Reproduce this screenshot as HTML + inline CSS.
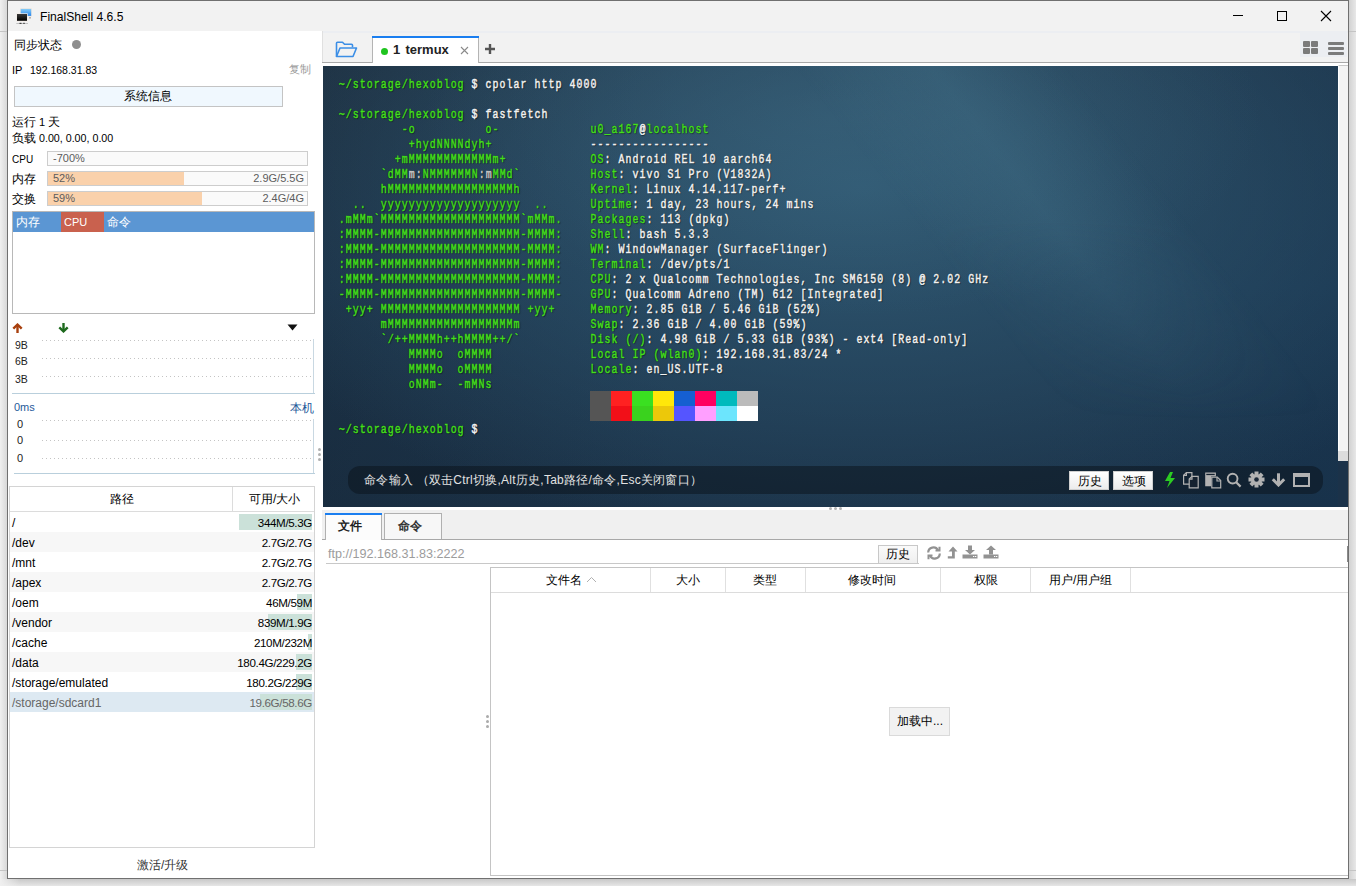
<!DOCTYPE html><html><head><meta charset="utf-8"><style>
*{margin:0;padding:0;box-sizing:border-box}
html,body{width:1356px;height:886px;overflow:hidden;background:#ececec;font-family:"Liberation Sans",sans-serif;font-size:12px;color:#000}
.ab{position:absolute}
.t{position:absolute;white-space:pre;line-height:1}
.term{position:absolute;left:323px;top:66px;width:1015px;height:441px;overflow:hidden;
 background:
  radial-gradient(ellipse 420px 200px at 520px 50px, rgba(72,118,142,0.3), rgba(72,118,142,0) 100%),
  radial-gradient(ellipse 680px 360px at 540px 120px, rgba(48,90,116,0.92), rgba(48,90,116,0) 100%),
  linear-gradient(90deg, rgba(18,28,38,0.25) 0%, rgba(18,28,38,0) 35%, rgba(18,50,80,0) 70%, rgba(18,50,80,0.35) 100%),
  linear-gradient(180deg,#213548 0%,#1e3850 50%,#1b3248 100%);
}
.streak{position:absolute;left:0;top:0;width:1015px;height:441px;background:linear-gradient(52deg, rgba(70,118,142,0) 60%, rgba(70,118,142,0.3) 70%, rgba(70,118,142,0) 80%);-webkit-mask-image:linear-gradient(180deg,#000 0%,#000 35%,transparent 80%)}
.tl{position:absolute;left:16px;font-family:"Liberation Mono",monospace;font-size:11.67px;line-height:15px;white-space:pre;color:#f2f2f2;transform:translateX(-0.3px) scale(0.85,1.1);transform-origin:0 10.6px;letter-spacing:1.235px;-webkit-text-stroke:0.45px currentColor;text-shadow:0 0 1px rgba(0,0,0,.9),1px 1px 1px rgba(0,0,0,.5)}
.g{color:#44de1e}
.w{color:#f2f2f2}
.gy{color:#c8c8c8}
</style></head><body>
<div class="ab" style="left:0;top:0;width:1356px;height:886px;background:#ebebeb"></div>
<div class="ab" style="left:1349px;top:0;width:7px;height:886px;background:linear-gradient(90deg,#d2d2d2,#e8e8e8)"></div>
<div class="ab" style="left:0;top:0;width:7px;height:886px;background:linear-gradient(90deg,#f0f0f0,#d8d8d8)"></div>
<div class="ab" style="left:0;top:879px;width:1356px;height:7px;background:linear-gradient(180deg,#c8c8c8,#e6e6e6)"></div>
<div class="ab" style="left:0;top:879px;width:20px;height:7px;background:linear-gradient(90deg,#f0f0f0,rgba(240,240,240,0))"></div>
<div class="ab" style="left:0;top:31px;width:7px;height:1px;background:#c4c4c4"></div>
<div class="ab" style="left:1349px;top:31px;width:7px;height:1px;background:#c4c4c4"></div>
<div class="ab" style="left:0;top:870px;width:7px;height:1px;background:#c4c4c4"></div>
<div class="ab" style="left:1349px;top:870px;width:7px;height:1px;background:#c4c4c4"></div>
<div class="ab" style="left:7px;top:0;width:1342px;height:879px;border:1px solid #707070;background:#fff"></div>
<div class="ab" style="left:8px;top:1px;width:1340px;height:30px;background:#f2f2f2"></div>
<svg class="ab" style="left:15px;top:7px" width="18" height="18" viewBox="0 0 18 18">
<defs><linearGradient id="bm" x1="0" y1="0" x2="0" y2="1"><stop offset="0" stop-color="#86cdf8"/><stop offset="1" stop-color="#2a86ec"/></linearGradient>
<linearGradient id="km" x1="0" y1="0" x2="0" y2="1"><stop offset="0" stop-color="#3a3a3a"/><stop offset="1" stop-color="#000"/></linearGradient></defs>
<rect x="5" y="1.2" width="11.8" height="8.4" fill="#efe6de"/>
<rect x="5.7" y="1.9" width="10.5" height="7" fill="url(#bm)"/>
<rect x="14" y="10.5" width="2" height="0.8" fill="#777"/>
<rect x="1.3" y="6.3" width="11.4" height="8.3" fill="#f3ece6"/>
<rect x="2" y="7" width="10" height="6.8" fill="url(#km)"/>
<rect x="1.3" y="16" width="11.7" height="0.9" fill="#bbb"/>
<rect x="4.5" y="15.8" width="2" height="1.2" fill="#444"/><rect x="8" y="15.8" width="2" height="1.2" fill="#666"/>
</svg>
<div class="t" style="left:40px;top:11px;font-size:12.1px;color:#000">FinalShell 4.6.5</div>
<div class="ab" style="left:1233px;top:15px;width:10px;height:1px;background:#000"></div>
<div class="ab" style="left:1277px;top:11px;width:10px;height:10px;border:1px solid #000"></div>
<svg class="ab" style="left:1320px;top:10px" width="12" height="12" viewBox="0 0 12 12"><path d="M1 1L11 11M11 1L1 11" stroke="#000" stroke-width="1.1"/></svg>
<div class="t" style="left:14px;top:39px;font-size:12px">同步状态</div>
<div class="ab" style="left:72px;top:40px;width:9px;height:9px;border-radius:50%;background:#8e8e8e"></div>
<div class="t" style="left:12px;top:65px;font-size:11px">IP</div>
<div class="t" style="left:30px;top:65px;font-size:10.5px">192.168.31.83</div>
<div class="t" style="left:289px;top:64px;font-size:11px;color:#9a9a9a">复制</div>
<div class="ab" style="left:14px;top:86px;width:269px;height:21px;border:1px solid #c4c4c4;background:#f0f8fe"></div>
<div class="t" style="left:124px;top:90px;font-size:12px">系统信息</div>
<div class="t" style="left:12px;top:116px;font-size:12px">运行<span style="font-size:11px"> 1 </span>天</div>
<div class="t" style="left:12px;top:132px;font-size:12px">负载<span style="font-size:10.7px"> 0.00, 0.00, 0.00</span></div>
<div class="t" style="left:12px;top:155px;font-size:10px">CPU</div>
<div class="ab" style="left:47px;top:151px;width:261px;height:15px;border:1px solid #cdcdcd;background:#fafafa"></div>
<div class="t" style="left:53px;top:153px;font-size:11px;color:#5c5c5c">-700%</div>
<div class="t" style="left:12px;top:173px;font-size:12px">内存</div>
<div class="ab" style="left:47px;top:171px;width:261px;height:15px;border:1px solid #cdcdcd;background:#fafafa"></div>
<div class="ab" style="left:48px;top:172px;width:136px;height:13px;background:#fad1ab"></div>
<div class="t" style="left:53px;top:173px;font-size:11px;color:#5c5c5c">52%</div>
<div class="t" style="right:1052px;top:173px;font-size:11px;color:#5c5c5c">2.9G/5.5G</div>
<div class="t" style="left:12px;top:193px;font-size:12px">交换</div>
<div class="ab" style="left:47px;top:191px;width:261px;height:15px;border:1px solid #cdcdcd;background:#fafafa"></div>
<div class="ab" style="left:48px;top:192px;width:154px;height:13px;background:#fad1ab"></div>
<div class="t" style="left:53px;top:193px;font-size:11px;color:#5c5c5c">59%</div>
<div class="t" style="right:1052px;top:193px;font-size:11px;color:#5c5c5c">2.4G/4G</div>
<div class="ab" style="left:12px;top:211px;width:303px;height:103px;border:1px solid #b8b8b8;background:#fff"></div>
<div class="ab" style="left:13px;top:212px;width:301px;height:20px;background:#5b96d3"></div>
<div class="ab" style="left:61px;top:212px;width:43px;height:20px;background:#c9614e"></div>
<div class="t" style="left:16px;top:216px;font-size:12px;color:#fff">内存</div>
<div class="t" style="left:64px;top:217px;font-size:11px;color:#fff">CPU</div>
<div class="t" style="left:107px;top:216px;font-size:12px;color:#fff">命令</div>
<svg class="ab" style="left:12px;top:323px" width="11" height="10" viewBox="0 0 11 10" fill="none" stroke="#a8400e"><path d="M5.5 2V10" stroke-width="2.4"/><path d="M1.3 5.6L5.5 1.6L9.7 5.6" stroke-width="2.4"/></svg>
<svg class="ab" style="left:58px;top:323px" width="11" height="10" viewBox="0 0 11 10" fill="none" stroke="#1e6a1e"><path d="M5.5 0V8" stroke-width="2.4"/><path d="M1.3 4.4L5.5 8.4L9.7 4.4" stroke-width="2.4"/></svg>
<svg class="ab" style="left:287px;top:324px" width="11" height="7" viewBox="0 0 11 7"><path d="M0.5 0.5H10.5L5.5 6.5Z" fill="#111"/></svg>
<div class="ab" style="left:12px;top:393px;width:303px;height:1px;background:#b9cfdc"></div>
<div class="ab" style="left:313px;top:339px;width:1px;height:54px;background:#c9d8e2"></div>
<div class="ab" style="left:42px;top:340px;width:271px;height:1px;background-image:linear-gradient(90deg,#c4c4c4 1px,transparent 1px);background-size:4px 1px"></div>
<div class="ab" style="left:42px;top:358px;width:271px;height:1px;background-image:linear-gradient(90deg,#c4c4c4 1px,transparent 1px);background-size:4px 1px"></div>
<div class="ab" style="left:42px;top:376px;width:271px;height:1px;background-image:linear-gradient(90deg,#c4c4c4 1px,transparent 1px);background-size:4px 1px"></div>
<div class="t" style="left:15px;top:340px;font-size:10.5px;color:#222">9B</div>
<div class="t" style="left:15px;top:356px;font-size:10.5px;color:#222">6B</div>
<div class="t" style="left:15px;top:374px;font-size:10.5px;color:#222">3B</div>
<div class="t" style="left:14px;top:402px;font-size:11px;color:#1f5a9a">0ms</div>
<div class="t" style="left:290px;top:402px;font-size:12px;color:#1f5a9a">本机</div>
<div class="ab" style="left:14px;top:473px;width:301px;height:1px;background:#b9cfdc"></div>
<div class="ab" style="left:313px;top:419px;width:1px;height:54px;background:#c9d8e2"></div>
<div class="ab" style="left:42px;top:420px;width:271px;height:1px;background-image:linear-gradient(90deg,#c4c4c4 1px,transparent 1px);background-size:4px 1px"></div>
<div class="ab" style="left:42px;top:440px;width:271px;height:1px;background-image:linear-gradient(90deg,#c4c4c4 1px,transparent 1px);background-size:4px 1px"></div>
<div class="ab" style="left:42px;top:458px;width:271px;height:1px;background-image:linear-gradient(90deg,#c4c4c4 1px,transparent 1px);background-size:4px 1px"></div>
<div class="t" style="left:17px;top:419px;font-size:11px;color:#222">0</div>
<div class="t" style="left:17px;top:435px;font-size:11px;color:#222">0</div>
<div class="t" style="left:17px;top:453px;font-size:11px;color:#222">0</div>
<div class="ab" style="left:318px;top:448px;width:3px;height:3px;border-radius:50%;background:#b0b0b0"></div>
<div class="ab" style="left:318px;top:453px;width:3px;height:3px;border-radius:50%;background:#b0b0b0"></div>
<div class="ab" style="left:318px;top:458px;width:3px;height:3px;border-radius:50%;background:#b0b0b0"></div>
<div class="ab" style="left:9px;top:486px;width:306px;height:362px;border:1px solid #d4d4d4;background:#fff"></div>
<div class="ab" style="left:10px;top:511px;width:304px;height:1px;background:#dcdcdc"></div>
<div class="ab" style="left:232px;top:487px;width:1px;height:24px;background:#dcdcdc"></div>
<div class="t" style="left:110px;top:493px;font-size:12px">路径</div>
<div class="t" style="left:249px;top:493px;font-size:12px">可用/大小</div>
<div class="ab" style="left:10px;top:512px;width:304px;height:20px;background:#fff"></div>
<div class="ab" style="left:239px;top:514px;width:73px;height:16px;background:#cbe1d9"></div>
<div class="t" style="left:12px;top:517px;font-size:12px;color:#000">/</div>
<div class="t" style="right:1044px;top:517px;font-size:11.6px;letter-spacing:-0.35px;color:#000">344M/5.3G</div>
<div class="ab" style="left:10px;top:532px;width:304px;height:20px;background:#f7f7f7"></div>
<div class="t" style="left:12px;top:537px;font-size:12px;color:#000">/dev</div>
<div class="t" style="right:1044px;top:537px;font-size:11.6px;letter-spacing:-0.35px;color:#000">2.7G/2.7G</div>
<div class="ab" style="left:10px;top:552px;width:304px;height:20px;background:#fff"></div>
<div class="t" style="left:12px;top:557px;font-size:12px;color:#000">/mnt</div>
<div class="t" style="right:1044px;top:557px;font-size:11.6px;letter-spacing:-0.35px;color:#000">2.7G/2.7G</div>
<div class="ab" style="left:10px;top:572px;width:304px;height:20px;background:#f7f7f7"></div>
<div class="t" style="left:12px;top:577px;font-size:12px;color:#000">/apex</div>
<div class="t" style="right:1044px;top:577px;font-size:11.6px;letter-spacing:-0.35px;color:#000">2.7G/2.7G</div>
<div class="ab" style="left:10px;top:592px;width:304px;height:20px;background:#fff"></div>
<div class="ab" style="left:297px;top:594px;width:15px;height:16px;background:#cbe1d9"></div>
<div class="t" style="left:12px;top:597px;font-size:12px;color:#000">/oem</div>
<div class="t" style="right:1044px;top:597px;font-size:11.6px;letter-spacing:-0.35px;color:#000">46M/59M</div>
<div class="ab" style="left:10px;top:612px;width:304px;height:20px;background:#f7f7f7"></div>
<div class="ab" style="left:268px;top:614px;width:44px;height:16px;background:#cbe1d9"></div>
<div class="t" style="left:12px;top:617px;font-size:12px;color:#000">/vendor</div>
<div class="t" style="right:1044px;top:617px;font-size:11.6px;letter-spacing:-0.35px;color:#000">839M/1.9G</div>
<div class="ab" style="left:10px;top:632px;width:304px;height:20px;background:#fff"></div>
<div class="ab" style="left:308px;top:634px;width:4px;height:16px;background:#cbe1d9"></div>
<div class="t" style="left:12px;top:637px;font-size:12px;color:#000">/cache</div>
<div class="t" style="right:1044px;top:637px;font-size:11.6px;letter-spacing:-0.35px;color:#000">210M/232M</div>
<div class="ab" style="left:10px;top:652px;width:304px;height:20px;background:#f7f7f7"></div>
<div class="ab" style="left:296px;top:654px;width:16px;height:16px;background:#cbe1d9"></div>
<div class="t" style="left:12px;top:657px;font-size:12px;color:#000">/data</div>
<div class="t" style="right:1044px;top:657px;font-size:11.6px;letter-spacing:-0.35px;color:#000">180.4G/229.2G</div>
<div class="ab" style="left:10px;top:672px;width:304px;height:20px;background:#fff"></div>
<div class="ab" style="left:296px;top:674px;width:16px;height:16px;background:#cbe1d9"></div>
<div class="t" style="left:12px;top:677px;font-size:12px;color:#000">/storage/emulated</div>
<div class="t" style="right:1044px;top:677px;font-size:11.6px;letter-spacing:-0.35px;color:#000">180.2G/229G</div>
<div class="ab" style="left:10px;top:692px;width:304px;height:20px;background:#dde9f2"></div>
<div class="ab" style="left:260px;top:694px;width:52px;height:16px;background:#cbe1d9"></div>
<div class="t" style="left:12px;top:697px;font-size:12px;color:#666">/storage/sdcard1</div>
<div class="t" style="right:1044px;top:697px;font-size:11.6px;letter-spacing:-0.35px;color:#666">19.6G/58.6G</div>
<div class="t" style="left:137px;top:859px;font-size:12px;color:#333">激活/升级</div>
<div class="ab" style="left:322px;top:31px;width:1026px;height:32px;background:#f2f2f2;border-left:1px solid #e0e0e0"></div>
<div class="ab" style="left:323px;top:31px;width:1025px;height:2px;background:#eceef2"></div>
<div class="ab" style="left:1300px;top:31px;width:47px;height:26px;background:#eceef2"></div>
<div class="ab" style="left:322px;top:62px;width:1026px;height:1px;background:#a8a8a8"></div>
<div class="ab" style="left:322px;top:63px;width:1026px;height:3px;background:#fff"></div>
<svg class="ab" style="left:335px;top:41px" width="23" height="17" viewBox="0 0 23 17">
<path d="M1.5 15.5V2.2Q1.5 1.2 2.5 1.2H7.5L9.5 3.2H16.5Q17.5 3.2 17.5 4.2V6.2" fill="none" stroke="#3b8ee6" stroke-width="1.6" stroke-linejoin="round"/>
<path d="M1.5 15.5L5 7H21.5L18 15.5Z" fill="none" stroke="#3b8ee6" stroke-width="1.6" stroke-linejoin="round"/>
</svg>
<div class="ab" style="left:372px;top:36px;width:107px;height:27px;background:#fff;border-left:1px solid #b4b4b4;border-right:1px solid #b4b4b4"></div>
<div class="ab" style="left:372px;top:36px;width:107px;height:2px;background:#1a7ef0"></div>
<div class="ab" style="left:381px;top:48px;width:7px;height:7px;border-radius:50%;background:#1fc41f"></div>
<div class="t" style="left:393px;top:43px;font-size:13px;font-weight:bold;color:#222">1</div>
<div class="t" style="left:405.5px;top:43px;font-size:13px;font-weight:bold;color:#222">termux</div>
<svg class="ab" style="left:460px;top:46px" width="9" height="9" viewBox="0 0 9 9"><path d="M1 1L8 8M8 1L1 8" stroke="#8a8a8a" stroke-width="1.1"/></svg>
<svg class="ab" style="left:484px;top:43px" width="12" height="12" viewBox="0 0 12 12"><path d="M6 1V11M1 6H11" stroke="#555" stroke-width="2.4"/></svg>
<div class="ab" style="left:1303px;top:41px;width:7px;height:6px;border-radius:1px;background:#7b7b7b"></div>
<div class="ab" style="left:1311px;top:41px;width:7px;height:6px;border-radius:1px;background:#7b7b7b"></div>
<div class="ab" style="left:1303px;top:48px;width:7px;height:6px;border-radius:1px;background:#7b7b7b"></div>
<div class="ab" style="left:1311px;top:48px;width:7px;height:6px;border-radius:1px;background:#7b7b7b"></div>
<div class="ab" style="left:1328px;top:42px;width:16px;height:3px;border-radius:1px;background:#7b7b7b"></div>
<div class="ab" style="left:1328px;top:47px;width:16px;height:3px;border-radius:1px;background:#7b7b7b"></div>
<div class="ab" style="left:1328px;top:52px;width:16px;height:3px;border-radius:1px;background:#7b7b7b"></div>
<div class="term">
<div class="streak"></div>
<div class="tl" style="top:11.5px"><span class="g">~/storage/hexoblog</span> $ cpolar http 4000</div>
<div class="tl" style="top:41.5px"><span class="g">~/storage/hexoblog</span> $ fastfetch</div>
<div class="tl" style="top:56.5px"><span class="g">         -o          o-</span>             <span class="g">u0_a167</span><span class="w">@</span><span class="g">localhost</span></div>
<div class="tl" style="top:71.5px"><span class="g">          +hydNNNNdyh+</span>              <span class="w">-----------------</span></div>
<div class="tl" style="top:86.5px"><span class="g">        +mMMMMMMMMMMMMm+</span>            <span class="g">OS</span><span class="w">: Android REL 10 aarch64</span></div>
<div class="tl" style="top:101.5px"><span class="g">      `dMM</span><span class="gy">m:</span><span class="g">NMMMMMMN</span><span class="gy">:m</span><span class="g">MMd`</span>          <span class="g">Host</span><span class="w">: vivo S1 Pro (V1832A)</span></div>
<div class="tl" style="top:116.5px"><span class="g">      hMMMMMMMMMMMMMMMMMMh</span>          <span class="g">Kernel</span><span class="w">: Linux 4.14.117-perf+</span></div>
<div class="tl" style="top:131.5px"><span class="g">  ..  yyyyyyyyyyyyyyyyyyyy  ..</span>      <span class="g">Uptime</span><span class="w">: 1 day, 23 hours, 24 mins</span></div>
<div class="tl" style="top:146.5px"><span class="g">.mMMm`MMMMMMMMMMMMMMMMMMMM`mMMm.</span>    <span class="g">Packages</span><span class="w">: 113 (dpkg)</span></div>
<div class="tl" style="top:161.5px"><span class="g">:MMMM-MMMMMMMMMMMMMMMMMMMM-MMMM:</span>    <span class="g">Shell</span><span class="w">: bash 5.3.3</span></div>
<div class="tl" style="top:176.5px"><span class="g">:MMMM-MMMMMMMMMMMMMMMMMMMM-MMMM:</span>    <span class="g">WM</span><span class="w">: WindowManager (SurfaceFlinger)</span></div>
<div class="tl" style="top:191.5px"><span class="g">:MMMM-MMMMMMMMMMMMMMMMMMMM-MMMM:</span>    <span class="g">Terminal</span><span class="w">: /dev/pts/1</span></div>
<div class="tl" style="top:206.5px"><span class="g">:MMMM-MMMMMMMMMMMMMMMMMMMM-MMMM:</span>    <span class="g">CPU</span><span class="w">: 2 x Qualcomm Technologies, Inc SM6150 (8) @ 2.02 GHz</span></div>
<div class="tl" style="top:221.5px"><span class="g">-MMMM-MMMMMMMMMMMMMMMMMMMM-MMMM-</span>    <span class="g">GPU</span><span class="w">: Qualcomm Adreno (TM) 612 [Integrated]</span></div>
<div class="tl" style="top:236.5px"><span class="g"> +yy+ MMMMMMMMMMMMMMMMMMMM +yy+</span>     <span class="g">Memory</span><span class="w">: 2.85 GiB / 5.46 GiB (52%)</span></div>
<div class="tl" style="top:251.5px"><span class="g">      mMMMMMMMMMMMMMMMMMMm</span>          <span class="g">Swap</span><span class="w">: 2.36 GiB / 4.00 GiB (59%)</span></div>
<div class="tl" style="top:266.5px"><span class="g">      `/++MMMMh++hMMMM++/`</span>          <span class="g">Disk (/)</span><span class="w">: 4.98 GiB / 5.33 GiB (93%) - ext4 [Read-only]</span></div>
<div class="tl" style="top:281.5px"><span class="g">          MMMMo  oMMMM</span>              <span class="g">Local IP (wlan0)</span><span class="w">: 192.168.31.83/24 *</span></div>
<div class="tl" style="top:296.5px"><span class="g">          MMMMo  oMMMM</span>              <span class="g">Locale</span><span class="w">: en_US.UTF-8</span></div>
<div class="tl" style="top:311.5px"><span class="g">          oNMm-  -mMNs</span></div>
<div class="tl" style="top:356.5px"><span class="g">~/storage/hexoblog</span> $</div>
<div class="ab" style="left:267px;top:325px;width:21px;height:15px;background:#555555"></div>
<div class="ab" style="left:288px;top:325px;width:21px;height:15px;background:#ff2121"></div>
<div class="ab" style="left:309px;top:325px;width:21px;height:15px;background:#3ae021"></div>
<div class="ab" style="left:330px;top:325px;width:21px;height:15px;background:#ffe70a"></div>
<div class="ab" style="left:351px;top:325px;width:21px;height:15px;background:#155fd1"></div>
<div class="ab" style="left:372px;top:325px;width:21px;height:15px;background:#ff0060"></div>
<div class="ab" style="left:393px;top:325px;width:21px;height:15px;background:#00babd"></div>
<div class="ab" style="left:414px;top:325px;width:21px;height:15px;background:#bbbbbb"></div>
<div class="ab" style="left:267px;top:340px;width:21px;height:15px;background:#555555"></div>
<div class="ab" style="left:288px;top:340px;width:21px;height:15px;background:#f20f18"></div>
<div class="ab" style="left:309px;top:340px;width:21px;height:15px;background:#3ad21e"></div>
<div class="ab" style="left:330px;top:340px;width:21px;height:15px;background:#ecc80a"></div>
<div class="ab" style="left:351px;top:340px;width:21px;height:15px;background:#5555ff"></div>
<div class="ab" style="left:372px;top:340px;width:21px;height:15px;background:#ff9fff"></div>
<div class="ab" style="left:393px;top:340px;width:21px;height:15px;background:#6ce5fd"></div>
<div class="ab" style="left:414px;top:340px;width:21px;height:15px;background:#ffffff"></div>
<div class="ab" style="left:25px;top:400px;width:975px;height:28px;border-radius:12px;background:rgba(10,18,26,0.5)"></div>
<div class="t" style="left:41px;top:408px;font-size:12px;letter-spacing:0.25px;color:#e2e2e2">命令输入 （双击Ctrl切换,Alt历史,Tab路径/命令,Esc关闭窗口）</div>
<div class="ab" style="left:746px;top:405px;width:40px;height:19px;border:1px solid #d0d0d0;background:linear-gradient(#ffffff,#ececec)"></div>
<div class="t" style="left:755px;top:409px;font-size:12px;color:#000">历史</div>
<div class="ab" style="left:790px;top:405px;width:40px;height:19px;border:1px solid #d0d0d0;background:linear-gradient(#ffffff,#ececec)"></div>
<div class="t" style="left:799px;top:409px;font-size:12px;color:#000">选项</div>
<svg class="ab" style="left:841px;top:405px" width="12" height="18" viewBox="0 0 12 18"><path d="M6 1L1 10H5.5L3 17L11 7H6.5L9 1Z" fill="#2ccc22"/></svg>
<svg class="ab" style="left:859px;top:405px" width="18" height="18" viewBox="0 0 18 18" fill="none" stroke="#b2b2b2" stroke-width="1.2">
<path d="M1.6 13.2V4.2L4.4 1.6H9.9V13.2Z"/><path d="M1.6 4.4H4.4V1.6"/>
<path d="M7.2 16.8V8L10 5.3H16.2V16.8Z" fill="#152230"/><path d="M7.2 8.2H10V5.3"/></svg>
<svg class="ab" style="left:882px;top:405px" width="18" height="18" viewBox="0 0 18 18">
<path d="M0.2 1.5H10.9V5.2H6.2V15.2H0.2Z" fill="#b2b2b2"/><rect x="1.3" y="2.8" width="8.4" height="1.3" fill="#152230"/>
<path d="M6.8 16.9V6.2H12.3L15.7 9.6V16.9Z" fill="none" stroke="#b2b2b2" stroke-width="1.2"/><path d="M12 6.2V10H15.7" fill="none" stroke="#b2b2b2" stroke-width="1.2"/></svg>
<svg class="ab" style="left:903px;top:406px" width="17" height="17" viewBox="0 0 17 17" fill="none" stroke="#b2b2b2">
<circle cx="6.6" cy="6.6" r="4.9" stroke-width="1.9"/><path d="M10.2 10.2L14.6 14.6" stroke-width="2.2"/></svg>
<svg class="ab" style="left:925px;top:405px" width="17" height="17" viewBox="0 0 17 17">
<g fill="#b2b2b2" transform="translate(8.5 8.5)">
<rect x="-2" y="-8" width="4" height="16"/><rect x="-2" y="-8" width="4" height="16" transform="rotate(45)"/>
<rect x="-2" y="-8" width="4" height="16" transform="rotate(90)"/><rect x="-2" y="-8" width="4" height="16" transform="rotate(135)"/>
<circle r="5.6"/></g><circle cx="8.5" cy="8.5" r="2.3" fill="#1a2838"/></svg>
<svg class="ab" style="left:948px;top:407px" width="15" height="14" viewBox="0 0 15 14" fill="none" stroke="#b2b2b2" stroke-width="3">
<path d="M7.5 0.3V11"/><path d="M1.8 6.3L7.5 12L13.2 6.3"/></svg>
<svg class="ab" style="left:970px;top:407px" width="17" height="14" viewBox="0 0 17 14" fill="none">
<rect x="1" y="1" width="15" height="12" stroke="#b2b2b2" stroke-width="2"/><rect x="1" y="1" width="15" height="3" fill="#b2b2b2"/></svg>
</div>
<div class="ab" style="left:1338px;top:65px;width:10px;height:396px;background:#f4f4f4;border-top:1px solid #c8c8c8;border-left:1px solid #fff"></div>
<div class="ab" style="left:1338px;top:451px;width:10px;height:10px;background:#dcdcdc"></div>
<div class="ab" style="left:1338px;top:461px;width:10px;height:46px;background:#1b3249"></div>
<div class="ab" style="left:322px;top:507px;width:1026px;height:3px;background:#fff"></div>
<div class="ab" style="left:322px;top:510px;width:1026px;height:29px;background:#f0f0f0"></div>
<div class="ab" style="left:829.0px;top:507px;width:3px;height:3px;border-radius:50%;background:#b4b4b4"></div>
<div class="ab" style="left:834.0px;top:507px;width:3px;height:3px;border-radius:50%;background:#b4b4b4"></div>
<div class="ab" style="left:839.0px;top:507px;width:3px;height:3px;border-radius:50%;background:#b4b4b4"></div>
<div class="ab" style="left:322px;top:539px;width:1026px;height:1px;background:#a8a8a8"></div>
<div class="ab" style="left:325px;top:513px;width:57px;height:27px;background:#fcfcfc;border-left:1px solid #b0b0b0;border-right:1px solid #b0b0b0"></div>
<div class="ab" style="left:325px;top:513px;width:57px;height:2px;background:#1a7ef0"></div>
<div class="ab" style="left:384px;top:513px;width:58px;height:26px;background:#f7f7f7;border:1px solid #b0b0b0;border-bottom:none"></div>
<div class="t" style="left:338px;top:520px;font-size:12px;font-weight:bold;color:#222">文件</div>
<div class="t" style="left:398px;top:520px;font-size:12px;font-weight:bold;color:#333">命令</div>
<div class="t" style="left:328px;top:548px;font-size:12.6px;color:#9c9c9c">ftp://192.168.31.83:2222</div>
<div class="ab" style="left:326px;top:563px;width:593px;height:1px;background:#c8c8c8"></div>
<div class="ab" style="left:878px;top:545px;width:40px;height:19px;border:1px solid #c8c8c8;background:linear-gradient(#fafafa,#efefef)"></div>
<div class="t" style="left:886px;top:548px;font-size:12px;color:#000">历史</div>
<svg class="ab" style="left:926px;top:546px" width="16" height="14" viewBox="0 0 16 14" fill="none" stroke="#929292" stroke-width="2.2">
<path d="M2.2 6.5A5.2 5.2 0 0 1 12 4.2"/><path d="M13.8 7.5A5.2 5.2 0 0 1 4 9.8"/>
<path d="M9.5 4.5H13.5V0.8" stroke-width="2"/><path d="M6.5 9.5H2.5V13.2" stroke-width="2"/></svg>
<svg class="ab" style="left:947px;top:546px" width="11" height="13" viewBox="0 0 11 13">
<path d="M6 0.5L10.5 5.5H7.8V12.5H0.8V10.3H5V5.5H1.5Z" fill="#929292"/></svg>
<svg class="ab" style="left:962px;top:545px" width="16" height="14" viewBox="0 0 16 14">
<path d="M6 0.5H10V5H13L8 9.5L3 5H6Z" fill="#929292"/><path d="M0.5 9.5H15.5V13.5H0.5Z" fill="#929292"/>
<rect x="11" y="11" width="1.3" height="1" fill="#fff"/><rect x="13" y="11" width="1.3" height="1" fill="#fff"/></svg>
<svg class="ab" style="left:983px;top:545px" width="16" height="14" viewBox="0 0 16 14">
<path d="M6 9.5H10V5H13L8 0.5L3 5H6Z" fill="#929292"/><path d="M0.5 9.5H15.5V13.5H0.5Z" fill="#929292"/>
<rect x="11" y="11" width="1.3" height="1" fill="#fff"/><rect x="13" y="11" width="1.3" height="1" fill="#fff"/></svg>
<div class="ab" style="left:1347px;top:546px;width:1px;height:16px;background:#8a8a8a"></div>
<div class="ab" style="left:490px;top:567px;width:858px;height:309px;border:1px solid #c4c4c4;border-right:none;background:#fff"></div>
<div class="ab" style="left:491px;top:592px;width:857px;height:1px;background:#dcdcdc"></div>
<div class="ab" style="left:650px;top:568px;width:1px;height:24px;background:#e0e0e0"></div>
<div class="ab" style="left:725px;top:568px;width:1px;height:24px;background:#e0e0e0"></div>
<div class="ab" style="left:805px;top:568px;width:1px;height:24px;background:#e0e0e0"></div>
<div class="ab" style="left:940px;top:568px;width:1px;height:24px;background:#e0e0e0"></div>
<div class="ab" style="left:1030px;top:568px;width:1px;height:24px;background:#e0e0e0"></div>
<div class="ab" style="left:1130px;top:568px;width:1px;height:24px;background:#e0e0e0"></div>
<div class="t" style="left:546px;top:574px;font-size:12px">文件名</div>
<svg class="ab" style="left:586px;top:576px" width="11" height="7" viewBox="0 0 11 7"><path d="M1 6L5.5 1.5L10 6" fill="none" stroke="#b0b0b0" stroke-width="1"/></svg>
<div class="t" style="left:676px;top:574px;font-size:12px">大小</div>
<div class="t" style="left:753px;top:574px;font-size:12px">类型</div>
<div class="t" style="left:848px;top:574px;font-size:12px">修改时间</div>
<div class="t" style="left:974px;top:574px;font-size:12px">权限</div>
<div class="t" style="left:1049px;top:574px;font-size:12px">用户/用户组</div>
<div class="ab" style="left:486px;top:715px;width:3px;height:3px;border-radius:50%;background:#ababab"></div>
<div class="ab" style="left:486px;top:720px;width:3px;height:3px;border-radius:50%;background:#ababab"></div>
<div class="ab" style="left:486px;top:725px;width:3px;height:3px;border-radius:50%;background:#ababab"></div>
<div class="ab" style="left:889px;top:707px;width:61px;height:29px;border:1px solid #dadada;background:#f2f2f2"></div>
<div class="t" style="left:897px;top:715px;font-size:12px">加载中...</div>
</body></html>
